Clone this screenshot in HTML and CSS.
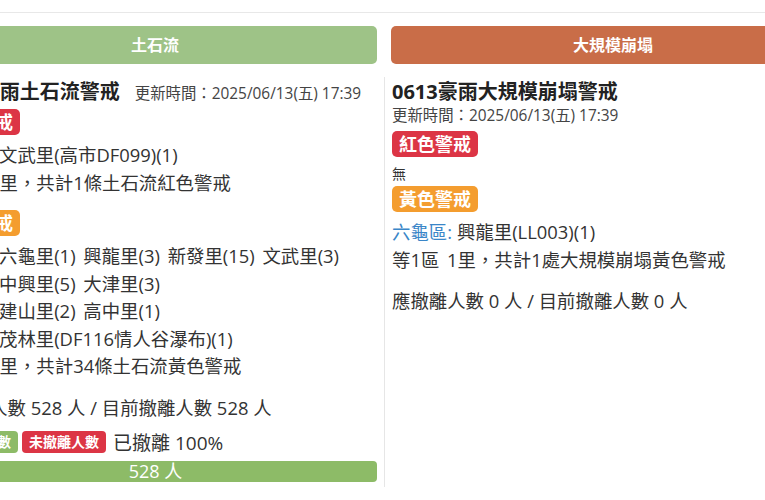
FILE: index.html
```html
<!DOCTYPE html>
<html lang="zh-Hant">

<head>
    <meta charset="UTF-8">
    <meta name="viewport" content="width=device-width, initial-scale=1.0">
    <title>警戒資訊</title>
    <link rel="stylesheet" href="styles.css">
</head>

<body>

    <div class="topbar"></div>

    <div class="board">
        <section class="col">
            <div class="col-head head-debris">土石流</div>
            <div class="col-body">
                <h3 class="title"><span>0613豪雨土石流警戒</span><span class="updated">更新時間：2025/06/13(五) 17:39</span></h3>

                <div class="level"><span class="badge badge-red">紅色警戒</span></div>
                <div class="areas">
                    <div><a class="dist">六龜區:</a>文武里(高市DF099)(1)</div>
                    <div>等1區 1里，共計1條土石流紅色警戒</div>
                </div>

                <div class="level"><span class="badge badge-orange">黃色警戒</span></div>
                <div class="areas">
                    <div><a class="dist">六龜區:</a>六龜里(1) 興龍里(3) 新發里(15) 文武里(3)</div>
                    <div><a class="dist">桃源區:</a>中興里(5) 大津里(3)</div>
                    <div><a class="dist">甲仙區:</a>建山里(2) 高中里(1)</div>
                    <div><a class="dist">茂林區:</a>茂林里(DF116情人谷瀑布)(1)</div>
                    <div>等4區 9里，共計34條土石流黃色警戒</div>
                </div>

                <p class="evac">應撤離人數 528 人 / 目前撤離人數 528 人</p>
                <div class="stat-row">
                    <span class="badge badge-sm badge-green">已撤離人數</span>
                    <span class="badge badge-sm badge-red">未撤離人數</span>
                    <span class="pct">已撤離 100%</span>
                </div>
                <div class="progress">
                    <div class="bar" style="width: 100%">528 人</div>
                </div>
            </div>
        </section>

        <section class="col">
            <div class="col-head head-slide">大規模崩塌</div>
            <div class="col-body col-body-right">
                <h3 class="title"><span>0613豪雨大規模崩塌警戒</span><span class="updated">更新時間：2025/06/13(五) 17:39</span></h3>

                <div class="level"><span class="badge badge-red">紅色警戒</span></div>
                <div class="none">無</div>

                <div class="level"><span class="badge badge-orange">黃色警戒</span></div>
                <div class="areas">
                    <div><a class="dist">六龜區:</a>興龍里(LL003)(1)</div>
                    <div>等1區 1里，共計1處大規模崩塌黃色警戒</div>
                </div>

                <p class="evac">應撤離人數 0 人 / 目前撤離人數 0 人</p>
            </div>
        </section>
    </div>

</body>

</html>
```

FILE: styles.css
```css
html,
body {
    overflow: hidden;
}

body {
    font-family: "Open Sans", "Noto Sans CJK TC", sans-serif;
    color: #333;
    margin: 0;
    background: #fff;
}

.topbar {
    height: 12px;
    border-bottom: 1px solid #e8e8e8;
}

.board {
    display: flex;
    gap: 14px;
    margin-top: 13px;
    margin-left: -67px;
}

.col {
    width: 444px;
    flex: none;
    display: flex;
    flex-direction: column;
}

.col-head {
    height: 38px;
    line-height: 38px;
    border-radius: 5px;
    color: #fff;
    font-weight: bold;
    font-size: 16px;
    text-align: center;
}

.head-debris {
    background-color: #9ec387;
}

.head-slide {
    background-color: #c96d48;
}

.col-body {
    flex: 1;
    margin-top: 13px;
    padding: 3px 0 5px 1px;
}

.col-body-right {
    margin-left: -7px;
    padding-left: 7px;
    border-left: 1px solid #e6e6e6;
}

.title {
    display: flex;
    flex-wrap: wrap;
    align-items: baseline;
    column-gap: 15px;
    margin: 0 0 3px;
    font-size: 20px;
    line-height: 24px;
    font-weight: bold;
    color: #222;
}

.updated {
    font-size: 15.4px;
    font-weight: normal;
    color: #444;
}

.level {
    display: flex;
    margin-bottom: 6px;
}

.badge {
    display: inline-block;
    color: #fff;
    font-weight: bold;
    font-size: 18px;
    line-height: 1;
    padding: 4px 7px;
    border-radius: 5px;
}

.badge-red {
    background-color: #dc3545;
}

.badge-orange {
    background-color: #f49d2f;
}

.badge-green {
    background-color: #8dbb67;
}

.badge-sm {
    font-size: 14px;
    padding: 4px 7px;
    border-radius: 4px;
}

.areas {
    font-size: 18.4px;
    line-height: 27.5px;
    word-spacing: 3px;
    margin-bottom: 14px;
}

.dist {
    color: #3a86c8;
    margin-right: 5px;
}

.none {
    font-size: 14px;
    line-height: 21px;
    margin-bottom: 2px;
}

.evac {
    font-size: 18.4px;
    line-height: 27px;
    margin: 0 0 6px;
}

.stat-row {
    display: flex;
    align-items: center;
    gap: 4px;
    height: 30px;
}

.pct {
    font-size: 19px;
    margin-left: 3px;
}

.progress {
    margin-top: 4px;
    height: 21px;
    border-radius: 4px;
    background-color: #e9ecef;
    overflow: hidden;
}

.bar {
    height: 21px;
    line-height: 21px;
    background-color: #8dbb67;
    color: #fff;
    font-size: 18px;
    text-align: center;
}
```
